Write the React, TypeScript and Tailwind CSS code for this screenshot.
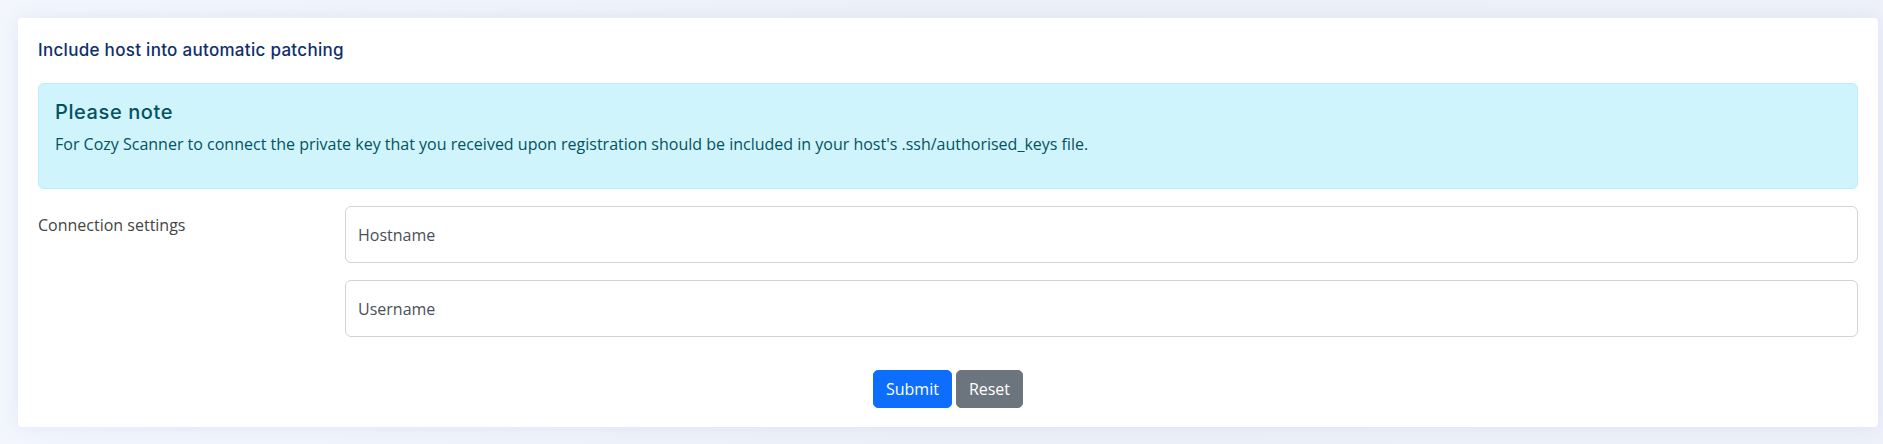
import React from "react";

export default function App() {
  return (
    <div className="w-[1883px] h-[444px] bg-gradient-to-r from-[#f3f6fd] via-[#edf0f8] to-[#eef1f9] pt-[18px] pl-[18px]">
      <div
        className="w-[1860px] h-[409px] bg-white rounded-[4px] shadow-[0_0_18px_rgba(150,165,210,0.18)] p-[20px] flex flex-col"
        style={{ fontFamily: "'Open Sans', 'Noto Sans', sans-serif" }}
      >
        <h2
          className="text-[17px] leading-[24px] font-medium text-[#0f2e6b] tracking-[0.3px]"
          style={{ fontFamily: "Inter, 'Noto Sans', sans-serif" }}
        >
          Include host into automatic patching
        </h2>

        <div className="mt-[21px] bg-[#cff4fc] border border-[#b6effb] rounded-[6px] p-[16px] text-[#055160]">
          <h4
            className="text-[20px] leading-[24px] font-medium mb-[8px] tracking-[0.6px]"
            style={{ fontFamily: "Inter, 'Noto Sans', sans-serif" }}
          >
            Please note
          </h4>
          <p className="text-[16px] leading-[24px] mb-[16px]">
            For Cozy Scanner to connect the private key that you received upon registration should be included in your host's .ssh/authorised_keys file.
          </p>
        </div>

        <div className="mt-[17px] flex">
          <div className="w-[307px] pt-[7px] text-[16px] leading-[24px] text-[#444]">
            Connection settings
          </div>
          <div className="flex-1 flex flex-col gap-[17px]">
            <input
              placeholder="Hostname"
              className="h-[57px] w-full border border-[#ced4da] rounded-[6px] px-[12px] text-[16px] text-[#212529] placeholder:text-[#495057] outline-none"
            />
            <input
              placeholder="Username"
              className="h-[57px] w-full border border-[#ced4da] rounded-[6px] px-[12px] text-[16px] text-[#212529] placeholder:text-[#495057] outline-none"
            />
          </div>
        </div>

        <div className="mt-[33px] flex justify-center gap-[4px]">
          <button className="h-[38px] px-[12px] rounded-[5px] bg-[#0d6efd] border border-[#0d6efd] text-white text-[16px] leading-[24px]">
            Submit
          </button>
          <button className="h-[38px] px-[12px] rounded-[5px] bg-[#6c757d] border border-[#6c757d] text-white text-[16px] leading-[24px]">
            Reset
          </button>
        </div>
      </div>
    </div>
  );
}
